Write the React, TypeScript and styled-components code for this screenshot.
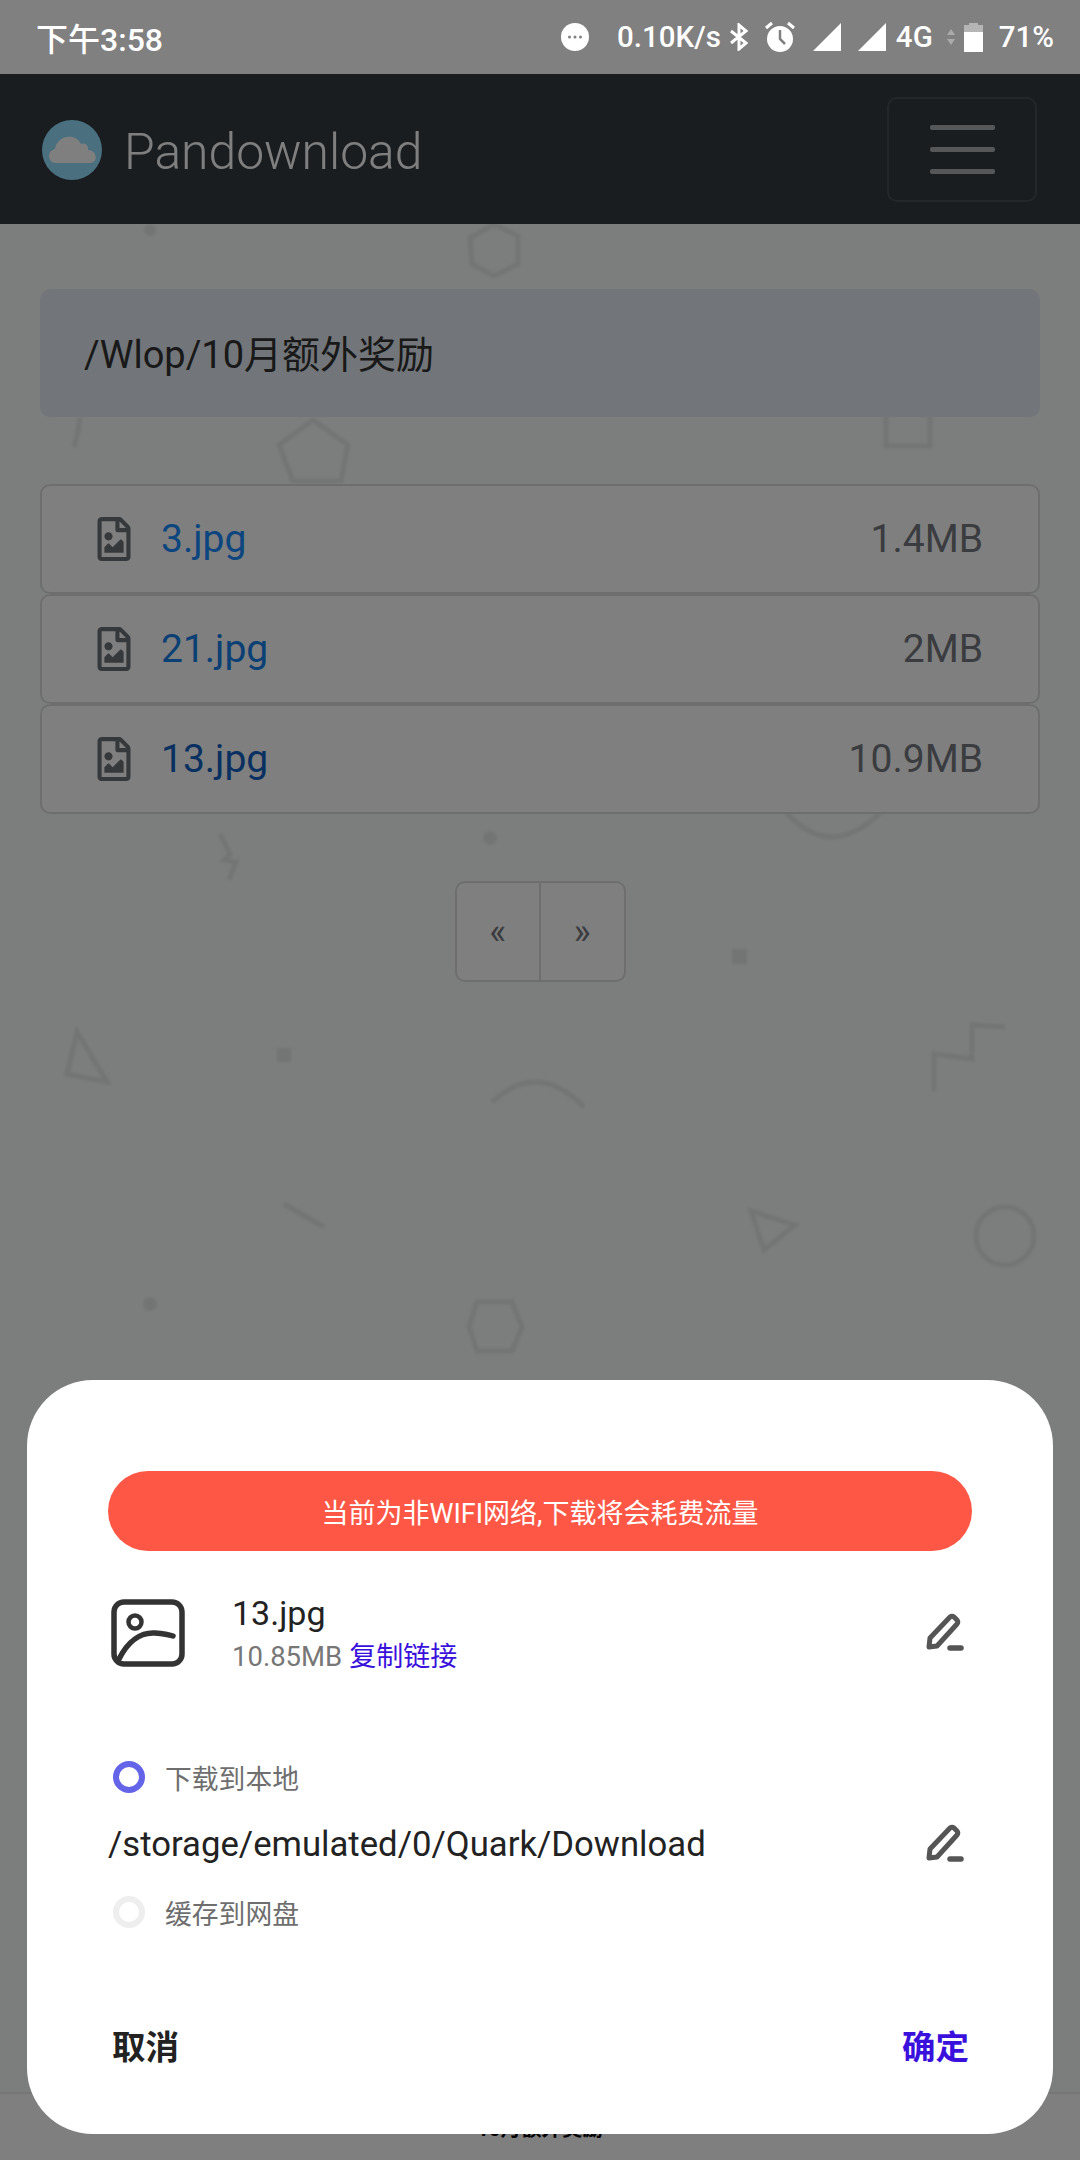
import React from "react";
import styled, { createGlobalStyle } from "styled-components";
import { FaRegFileImage } from "react-icons/fa";

const Global = createGlobalStyle`
  html, body { margin: 0; padding: 0; background: #808080; }
  * { box-sizing: border-box; }
`;

const FONT = `Roboto, "Noto Sans CJK SC", sans-serif`;

const Screen = styled.div`
  position: relative;
  width: 1080px;
  height: 2160px;
  overflow: hidden;
  display: flex;
  flex-direction: column;
  background: #f6fcfa;
  font-family: ${FONT};
`;

const Backdrop = styled.svg`
  position: absolute;
  left: 0;
  top: 0;
  width: 1080px;
  height: 2160px;
  filter: blur(1px);
`;

const StatusBar = styled.div`
  position: relative;
  z-index: 3;
  height: 74px;
  flex: none;
  background: #808080;
  color: #fff;
  display: flex;
  align-items: center;
  padding: 0 26px 0 36px;
  font-weight: 500;
`;

const Clock = styled.span`
  font-size: 32px;
  margin-right: auto;
`;

const StatusText = styled.span<{ $gap?: number }>`
  font-size: 29.5px;
  margin-left: ${(p) => p.$gap ?? 0}px;
`;

const StatusIcon = styled.svg<{ $gap?: number }>`
  display: block;
  flex: none;
  margin-left: ${(p) => p.$gap ?? 0}px;
`;

const NavBar = styled.nav`
  position: relative;
  height: 150px;
  flex: none;
  background: #343a40;
  display: flex;
  align-items: center;
  padding: 0 43px 0 42px;
`;

const Brand = styled.div`
  display: flex;
  align-items: center;
  gap: 22px;
  margin-right: auto;
  margin-top: 2px;
`;

const BrandName = styled.span`
  color: #fff;
  font-size: 49.8px;
  font-weight: 300;
  line-height: 60px;
  margin-top: 4px;
`;

const Toggler = styled.div`
  width: 150px;
  height: 105px;
  border: 2px solid rgba(255, 255, 255, 0.1);
  border-radius: 10px;
  display: flex;
  flex-direction: column;
  align-items: center;
  justify-content: center;
  gap: 17px;
`;

const TogglerBar = styled.span`
  width: 65px;
  height: 5px;
  border-radius: 2px;
  background: #aaaeb2;
`;

const Main = styled.main`
  position: relative;
  flex: 1;
  padding: 65px 40px 0;
  display: flex;
  flex-direction: column;
`;

const Crumb = styled.div`
  height: 128px;
  background: #e4ecf4;
  border-radius: 10px;
  padding: 0 44px 4px;
  display: flex;
  align-items: center;
  font-size: 38px;
  color: #333;
`;

const FileList = styled.div`
  margin-top: 67px;
  display: flex;
  flex-direction: column;
`;

const FileRow = styled.div`
  height: 110px;
  background: #fff;
  border: 2px solid #dcdddd;
  border-radius: 10px;
  display: flex;
  align-items: center;
  padding: 0 55px 0 50px;
  color: #6c7278;
`;

const FileName = styled.a<{ $color: string }>`
  color: ${(p) => p.$color};
  font-size: 39px;
  margin-left: 25px;
`;

const FileSize = styled.span`
  margin-left: auto;
  font-size: 39px;
  color: #74797f;
`;

const Pager = styled.div`
  margin: 67px auto 0;
  width: 171px;
  height: 101px;
  background: #fff;
  border: 2px solid #dcdddd;
  border-radius: 10px;
  display: flex;
`;

const PagerCell = styled.span`
  flex: 1;
  display: flex;
  align-items: center;
  justify-content: center;
  font-size: 36px;
  color: #74797f;
  & + & { border-left: 2px solid #dcdddd; }
`;

const BottomBar = styled.div`
  flex: none;
  height: 68px;
  background: #fff;
  border-top: 2px solid #ececec;
  display: flex;
  align-items: center;
  justify-content: center;
  font-size: 20.5px;
  font-weight: 700;
  color: #000;
`;

const Overlay = styled.div`
  position: absolute;
  left: 0;
  right: 0;
  top: 74px;
  bottom: 0;
  z-index: 2;
  background: rgba(0, 0, 0, 0.5);
`;

const Sheet = styled.section`
  position: absolute;
  z-index: 4;
  left: 27px;
  top: 1380px;
  width: 1026px;
  height: 754px;
  background: #fff;
  border-radius: 66px;
  padding: 91px 81px 0;
  display: flex;
  flex-direction: column;
`;

const Warning = styled.div`
  height: 80px;
  border-radius: 40px;
  background: #ff5745;
  color: #fff;
  font-size: 27px;
  display: flex;
  align-items: center;
  justify-content: center;
`;

const FileInfo = styled.div`
  margin-top: 42px;
  display: flex;
  align-items: center;
  height: 86px;
  padding-right: 7px;
`;

const FileGlyph = styled.svg`
  display: block;
  flex: none;
  width: 74px;
  height: 68px;
  margin: -6px 47px 0 3px;
`;

const FileText = styled.div`
  flex: 1;
  display: flex;
  flex-direction: column;
`;

const SheetName = styled.div`
  font-size: 34px;
  line-height: 42px;
  color: #222;
`;

const SheetMeta = styled.div`
  font-size: 27.5px;
  line-height: 46px;
  color: #777;
`;

const CopyLink = styled.span`
  color: #3a10dc;
  font-size: 27px;
  margin-left: 7px;
`;

const Pencil = styled.svg<{ $lift: number }>`
  display: block;
  flex: none;
  width: 40px;
  height: 40px;
  margin-top: -${(p) => p.$lift}px;
`;

const RadioRow = styled.div<{ $top: number }>`
  margin-top: ${(p) => p.$top}px;
  height: 40px;
  display: flex;
  align-items: center;
  padding-left: 5px;
  font-size: 26.8px;
  color: #6e6e6e;
`;

const RadioDot = styled.span<{ $on?: boolean }>`
  width: 32px;
  height: 32px;
  border-radius: 50%;
  border: 6px solid ${(p) => (p.$on ? "#6464e8" : "#eeeeee")};
  margin-right: 20px;
`;

const PathRow = styled.div`
  margin-top: 22px;
  height: 50px;
  display: flex;
  align-items: center;
  justify-content: space-between;
  padding-right: 7px;
  font-size: 34.7px;
  color: #222;
`;

const Actions = styled.div`
  margin-top: 87px;
  height: 50px;
  display: flex;
  align-items: center;
  justify-content: space-between;
  padding: 0 3px 0 4px;
`;

const Action = styled.span<{ $primary?: boolean }>`
  font-size: 33.5px;
  font-weight: 700;
  color: ${(p) => (p.$primary ? "#3a10dc" : "#222")};
`;

const PencilIcon = ({ lift }: { lift: number }) => (
  <Pencil $lift={lift} viewBox="0 0 40 40" fill="none" stroke="#555" strokeLinejoin="round" strokeLinecap="round">
    <path d="M4 36 L5 27 L25 6 Q27 4.5 29 6 L32 9 Q33.5 11 32 13 L12 35 Z" strokeWidth="5" />
    <path d="M25 37 H36" strokeWidth="5.5" />
  </Pencil>
);

const shapeStroke = "#e7ebea";

const BackgroundShapes = () => (
  <Backdrop viewBox="0 0 1080 2160" fill="none" stroke={shapeStroke} strokeWidth="5">
    <circle cx="150" cy="230" r="6" fill={shapeStroke} stroke="none" />
    <path d="M494 224 L518 236 L518 264 L494 276 L472 264 L470 238 Z" />
    <path d="M80 418 Q78 434 74 447" />
    <path d="M313 420 L348 445 L341 481 L293 481 L279 445 Z" />
    <rect x="886" y="400" width="44" height="46" />
    <path d="M786 812 Q830 862 881 812" />
    <path d="M220 834 L230 854 L224 860 L236 862 L229 880" />
    <circle cx="490" cy="838" r="7" fill={shapeStroke} stroke="none" />
    <rect x="732" y="949" width="15" height="15" fill={shapeStroke} stroke="none" />
    <path d="M77 1032 L107 1082 L67 1074 Z" />
    <rect x="277" y="1048" width="14" height="14" fill={shapeStroke} stroke="none" />
    <path d="M492 1102 Q538 1060 584 1107" />
    <path d="M934 1091 L934 1054 L972 1059 L972 1025 L1005 1027" />
    <path d="M284 1204 L324 1227" />
    <path d="M751 1211 L795 1225 L764 1250 Z" />
    <circle cx="1005" cy="1236" r="29" />
    <circle cx="150" cy="1304" r="7" fill={shapeStroke} stroke="none" />
    <path d="M477 1302 L512 1302 L522 1327 L512 1351 L477 1351 L469 1327 Z" />
  </Backdrop>
);

export default function App() {
  return (
    <Screen>
      <Global />
      <BackgroundShapes />
      <StatusBar>
        <Clock>下午3:58</Clock>
        <StatusIcon width="28" height="28" viewBox="0 0 28 28">
          <circle cx="14" cy="14" r="14" fill="#fff" />
          <circle cx="8.5" cy="14" r="1.5" fill="#808080" />
          <circle cx="14" cy="14" r="1.5" fill="#808080" />
          <circle cx="19.5" cy="14" r="1.5" fill="#808080" />
        </StatusIcon>
        <StatusText $gap={28}>0.10K/s</StatusText>
        <StatusIcon $gap={8} width="20" height="28" viewBox="0 0 20 28" fill="none" stroke="#fff" strokeWidth="3">
          <path d="M2 8 L17 20 L10 26 L10 2 L17 8 L2 20" />
        </StatusIcon>
        <StatusIcon $gap={15} width="32" height="32" viewBox="0 0 32 32" fill="none">
          <circle cx="16" cy="18" r="13" fill="#fff" />
          <path d="M16 9 V18 L21 23" stroke="#808080" strokeWidth="2.5" />
          <path d="M2 7 L8 2 M30 7 L24 2" stroke="#fff" strokeWidth="3" />
        </StatusIcon>
        <StatusIcon $gap={17} width="28" height="28" viewBox="0 0 28 28">
          <path d="M0 28 L28 0 V28 Z" fill="#fff" />
        </StatusIcon>
        <StatusIcon $gap={17} width="28" height="28" viewBox="0 0 28 28">
          <path d="M0 28 L28 0 V28 Z" fill="#fff" />
        </StatusIcon>
        <StatusText $gap={10}>4G</StatusText>
        <StatusIcon $gap={14} width="8" height="16" viewBox="0 0 8 16">
          <path d="M4 0 L8 6 H0 Z M4 16 L8 10 H0 Z" fill="#aaa" />
        </StatusIcon>
        <StatusIcon $gap={9} width="19" height="29" viewBox="0 0 19 29">
          <path d="M5 0 H14 V2 H19 V9 H0 V2 H5 Z" fill="#b5b5b5" />
          <rect y="9" width="19" height="20" fill="#fff" />
        </StatusIcon>
        <StatusText $gap={16}>71%</StatusText>
      </StatusBar>

      <NavBar>
        <Brand>
          <svg width="60" height="60" viewBox="0 0 60 60" style={{ display: "block", flex: "none" }}>
            <circle cx="30" cy="30" r="30" fill="#94e0ff" />
            <path d="M14 43 C6 43 4 31 13 29 C15 16 33 12 39 24 C43 22 47 26 46 30 C55 30 57 43 48 43 Z" fill="#fff" />
          </svg>
          <BrandName>Pandownload</BrandName>
        </Brand>
        <Toggler>
          <TogglerBar />
          <TogglerBar />
          <TogglerBar />
        </Toggler>
      </NavBar>

      <Main>
        <Crumb>/Wlop/10月额外奖励</Crumb>
        <FileList>
          <FileRow>
            <FaRegFileImage size={44} />
            <FileName $color="#1a8cff">3.jpg</FileName>
            <FileSize>1.4MB</FileSize>
          </FileRow>
          <FileRow>
            <FaRegFileImage size={44} />
            <FileName $color="#1580e8">21.jpg</FileName>
            <FileSize>2MB</FileSize>
          </FileRow>
          <FileRow>
            <FaRegFileImage size={44} />
            <FileName $color="#1060c0">13.jpg</FileName>
            <FileSize>10.9MB</FileSize>
          </FileRow>
        </FileList>
        <Pager>
          <PagerCell>«</PagerCell>
          <PagerCell>»</PagerCell>
        </Pager>
      </Main>

      <BottomBar>10月额外奖励</BottomBar>
      <Overlay />

      <Sheet>
        <Warning>当前为非WIFI网络,下载将会耗费流量</Warning>
        <FileInfo>
          <FileGlyph viewBox="0 0 74 68" fill="none" stroke="#333" strokeLinecap="round">
            <rect x="3" y="3" width="68" height="62" rx="10" strokeWidth="5.5" />
            <circle cx="24" cy="23" r="6.5" strokeWidth="4.5" />
            <path d="M8 60 C17 42 30 33 44 34 C50 34.5 56 35 62 37" strokeWidth="5.5" />
          </FileGlyph>
          <FileText>
            <SheetName>13.jpg</SheetName>
            <SheetMeta>
              10.85MB<CopyLink>复制链接</CopyLink>
            </SheetMeta>
          </FileText>
          <PencilIcon lift={10} />
        </FileInfo>
        <RadioRow $top={78}>
          <RadioDot $on />
          下载到本地
        </RadioRow>
        <PathRow>
          /storage/emulated/0/Quark/Download
          <PencilIcon lift={4} />
        </PathRow>
        <RadioRow $top={23}>
          <RadioDot />
          缓存到网盘
        </RadioRow>
        <Actions>
          <Action>取消</Action>
          <Action $primary>确定</Action>
        </Actions>
      </Sheet>
    </Screen>
  );
}
